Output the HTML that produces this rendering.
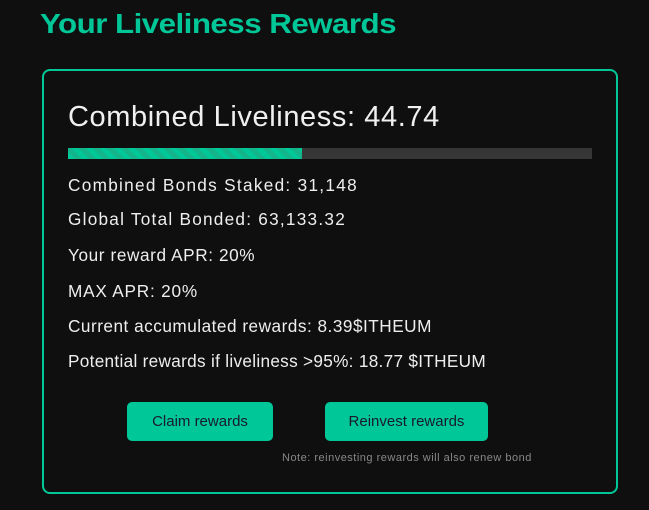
<!DOCTYPE html>
<html><head><style>
body{margin:0;width:649px;height:510px;background:#0f0f0f;font-family:"Liberation Sans",sans-serif;position:relative;overflow:hidden;color:#eee}
.t{position:absolute;left:40px;top:8px;font-size:28px;font-weight:bold;color:#00c797;white-space:nowrap;transform-origin:left top;transform:scaleX(1.12);letter-spacing:-0.5px}
.card{position:absolute;left:42px;top:69px;width:572px;height:421px;border:2px solid #00c797;border-radius:8px}
.h{position:absolute;left:68px;top:101px;font-size:29px;color:#f0f0f0;white-space:nowrap;letter-spacing:0.6px}
.bar{position:absolute;left:68px;top:148px;width:524px;height:11px;background:#363636}
.fill{width:234px;height:11px;background:repeating-linear-gradient(45deg,#00c797 0 5px,#15b58c 5px 10px)}
.l{position:absolute;left:68px;font-size:17.2px;color:#eee;white-space:nowrap}
.b{position:absolute;top:402px;height:39px;background:#00c797;border-radius:5px;color:#1a1a2a;font-size:15px;display:flex;align-items:center;justify-content:center}
.n{position:absolute;left:282px;top:452px;font-size:11px;color:#888;white-space:nowrap;letter-spacing:0.5px}
</style></head><body>
<div class="t">Your Liveliness Rewards</div>
<div class="card"></div>
<div class="h">Combined Liveliness: 44.74</div>
<div class="bar"><div class="fill"></div></div>
<div class="l" style="top:175px;letter-spacing:1.3px">Combined Bonds Staked: 31,148</div>
<div class="l" style="top:209px;letter-spacing:1.25px">Global Total Bonded: 63,133.32</div>
<div class="l" style="top:245px;letter-spacing:0.6px">Your reward APR: 20%</div>
<div class="l" style="top:281px;letter-spacing:0.8px">MAX APR: 20%</div>
<div class="l" style="top:316px;letter-spacing:0.5px">Current accumulated rewards: 8.39$ITHEUM</div>
<div class="l" style="top:351px;letter-spacing:0.3px">Potential rewards if liveliness &gt;95%: 18.77 $ITHEUM</div>
<div class="b" style="left:127px;width:146px">Claim rewards</div>
<div class="b" style="left:325px;width:163px">Reinvest rewards</div>
<div class="n">Note: reinvesting rewards will also renew bond</div>
</body></html>
